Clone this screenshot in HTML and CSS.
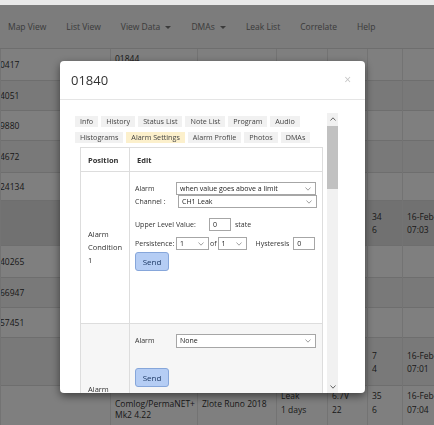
FILE: index.html
```html
<!DOCTYPE html>
<html lang="en">
<head>
<meta charset="utf-8">
<title>01840</title>
<link rel="stylesheet" href="styles.css">
</head>
<body>
<div class="topstrip"></div>
<nav class="navbar">
  <a>Map View</a>
  <a>List View</a>
  <a>View Data <span class="caret"></span></a>
  <a>DMAs <span class="caret"></span></a>
  <a>Leak List</a>
  <a>Correlate</a>
  <a>Help</a>
</nav>
<table class="list">
  <colgroup>
    <col class="w0"><col class="w1"><col class="w2"><col class="w3"><col class="w4"><col class="w5"><col class="w6">
  </colgroup>
  <tbody>
    <tr class="h32"><td class="idc">0417</td><td class="top">01844</td><td></td><td></td><td></td><td></td><td></td></tr>
    <tr class="h30 odd"><td class="idc">4051</td><td></td><td></td><td></td><td></td><td></td><td></td></tr>
    <tr class="h30"><td class="idc">9880</td><td></td><td></td><td></td><td></td><td></td><td></td></tr>
    <tr class="h32 odd"><td class="idc">4672</td><td></td><td></td><td></td><td></td><td></td><td></td></tr>
    <tr class="h28"><td class="idc">24134</td><td></td><td></td><td></td><td></td><td></td><td></td></tr>
    <tr class="h45 hl"><td class="idc"></td><td></td><td></td><td></td><td></td><td>34<br>6</td><td>16-Feb-<br>07:03</td></tr>
    <tr class="h32"><td class="idc">40265</td><td></td><td></td><td></td><td></td><td></td><td></td></tr>
    <tr class="h30 odd"><td class="idc">66947</td><td></td><td></td><td></td><td></td><td></td><td></td></tr>
    <tr class="h30"><td class="idc">57451</td><td></td><td></td><td></td><td></td><td></td><td></td></tr>
    <tr class="h48 odd"><td class="idc"></td><td></td><td></td><td></td><td></td><td>7<br>4</td><td>16-Feb-<br>07:01</td></tr>
    <tr class="h50 last"><td class="idc"></td><td class="dev">Comlog/PermaNET+<br>Mk2 4.22</td><td class="dev">Zlote Runo 2018</td><td>Leak<br>1 days</td><td>6.7V<br>22</td><td>35<br>6</td><td>16-Feb-<br>07:04</td></tr>
  </tbody>
</table>

<div class="backdrop"></div>

<div class="modal">
  <div class="modal-header">
    <h4 class="modal-title">01840</h4>
    <span class="close">&times;</span>
  </div>
  <div class="modal-body">
    <div class="pane">
      <ul class="tabs">
        <li>Info</li>
        <li>History</li>
        <li>Status List</li>
        <li>Note List</li>
        <li>Program</li>
        <li>Audio</li>
        <li>Histograms</li>
        <li class="active">Alarm Settings</li>
        <li>Alarm Profile</li>
        <li>Photos</li>
        <li>DMAs</li>
      </ul>
      <table class="alarms">
        <thead>
          <tr><th class="c-pos">Position</th><th>Edit</th></tr>
        </thead>
        <tbody>
          <tr>
            <td class="pos">Alarm<br>Condition<br>1</td>
            <td class="edit">
              <div class="form">
                <div class="frow">
                  <span class="lbl">Alarm</span>
                  <div class="select wide"><span>when value goes above a limit</span><svg class="chev" viewBox="0 0 6 4" width="6" height="4"><polyline points="0.5,0.5 3,3.2 5.5,0.5"/></svg></div>
                </div>
                <div class="frow">
                  <span class="lbl ch">Channel :</span>
                  <div class="select wide2"><span>CH1 Leak</span><svg class="chev" viewBox="0 0 6 4" width="6" height="4"><polyline points="0.5,0.5 3,3.2 5.5,0.5"/></svg></div>
                </div>
                <div class="frow gap10">
                  <span class="lbl upper">Upper Level Value:</span>
                  <div class="input">0</div>
                  <span class="unit">state</span>
                </div>
                <div class="frow gap6">
                  <span class="lbl">Persistence:</span>
                  <div class="select s1"><span>1</span><svg class="chev" viewBox="0 0 6 4" width="6" height="4"><polyline points="0.5,0.5 3,3.2 5.5,0.5"/></svg></div>
                  <span class="of">of</span>
                  <div class="select s2"><span>1</span><svg class="chev" viewBox="0 0 6 4" width="6" height="4"><polyline points="0.5,0.5 3,3.2 5.5,0.5"/></svg></div>
                  <span class="hyst">Hysteresis</span>
                  <div class="input">0</div>
                </div>
                <button class="send">Send</button>
              </div>
            </td>
          </tr>
          <tr class="alt">
            <td class="pos">Alarm<br>Condition<br>2</td>
            <td class="edit">
              <div class="form">
                <div class="frow">
                  <span class="lbl">Alarm</span>
                  <div class="select wide tall"><span>None</span><svg class="chev" viewBox="0 0 6 4" width="6" height="4"><polyline points="0.5,0.5 3,3.2 5.5,0.5"/></svg></div>
                </div>
                <button class="send far">Send</button>
              </div>
            </td>
          </tr>
        </tbody>
      </table>
    </div>
    <div class="sb">
      <div class="sb-btn"><svg viewBox="0 0 6 4" width="6" height="4"><polyline points="0.5,3.5 3,0.8 5.5,3.5"/></svg></div>
      <div class="sb-thumb"></div>
      <div class="sb-track"></div>
      <div class="sb-btn"><svg viewBox="0 0 6 4" width="6" height="4"><polyline points="0.5,0.5 3,3.2 5.5,0.5"/></svg></div>
    </div>
  </div>
</div>
</body>
</html>
```

FILE: styles.css
```css
html, body {
  margin: 0;
  padding: 0;
}
body {
  width: 434px;
  height: 425px;
  overflow: hidden;
  background: #fff;
  color: #333;
  font-family: "Open Sans", "Noto Sans", sans-serif;
}

/* page behind the dialog */
.topstrip {
  height: 5px;
  background: #e9e9e9;
}
.navbar {
  height: 42px;
  box-sizing: content-box;
  border-bottom: 1px solid #dcdcdc;
  background: #f8f8f8;
  display: flex;
  align-items: center;
  gap: 20px;
  padding: 0 0 2px 8px;
  font-size: 8.5px;
  color: #777;
  white-space: nowrap;
}
.caret {
  display: inline-block;
  width: 0;
  height: 0;
  margin-left: 3px;
  vertical-align: middle;
  border-top: 3px solid #777;
  border-left: 3px solid transparent;
  border-right: 3px solid transparent;
}
.list {
  width: 462px;
  table-layout: fixed;
  border-collapse: collapse;
  font-size: 8.5px;
  line-height: 13px;
  color: #333;
  margin-top: -2px;
}
.w0 { width: 110px; }
.w1 { width: 87px; }
.w2 { width: 79px; }
.w3 { width: 51px; }
.w4 { width: 40px; }
.w5 { width: 35px; }
.w6 { width: 60px; }
.list td {
  border-top: 1px solid #ddd;
  border-left: 1px solid #e6e6e6;
  padding: 0 0 0 4px;
  vertical-align: middle;
  white-space: nowrap;
  overflow: hidden;
}
.list tr { background: #fff; }
.list tr.odd { background: #f2f2f2; }
.list tr.hl { background: #e2e2e2; }
.list td.idc { padding-left: 0; text-indent: -1px; }
.list td.top { vertical-align: top; padding-top: 3px; }
.h28 { height: 28px; }
.h30 { height: 30px; }
.h32 { height: 32px; }
.h45 { height: 45px; }
.h48 { height: 48px; }
.h50 { height: 50px; }
.list tr.last td {
  vertical-align: top;
  padding-top: 3px;
  line-height: 14px;
}
.list tr.last td.dev {
  padding-top: 12px;
  line-height: 11px;
}

.backdrop {
  position: fixed;
  top: 5px;
  left: 0;
  right: 0;
  bottom: 0;
  background: rgba(0, 0, 0, 0.5);
}

/* dialog */
.modal {
  position: fixed;
  left: 60px;
  top: 61px;
  width: 305px;
  height: 332px;
  background: #fff;
  border-radius: 4px;
  box-shadow: 0 3px 9px rgba(0, 0, 0, 0.5);
  overflow: hidden;
  display: flex;
  flex-direction: column;
  color: #333;
}
.modal-header {
  height: 38px;
  flex: none;
  border-bottom: 1px solid #e5e5e5;
  display: flex;
  align-items: center;
  justify-content: space-between;
  padding: 0 14px 0 11px;
}
.modal-title {
  margin: 0;
  font-size: 13px;
  font-weight: normal;
  color: #333;
}
.close {
  font-size: 12px;
  color: #c4c4c4;
  line-height: 1;
}
.modal-body {
  flex: 1;
  min-height: 0;
  display: flex;
  padding: 13px 27px 0 15px;
}
.pane {
  flex: 1;
  min-width: 0;
  overflow: hidden;
  padding-top: 3px;
}

.tabs {
  list-style: none;
  margin: 0;
  padding: 0;
  display: flex;
  flex-wrap: wrap;
  gap: 5px 3px;
}
.tabs li {
  height: 11px;
  line-height: 11px;
  padding: 0 5px;
  background: #f1f1f1;
  font-size: 7.2px;
  color: #444;
  white-space: nowrap;
}
.tabs li.active {
  background: #fcf0cc;
}

.alarms {
  margin: 4px 0 0 5px;
  width: 241px;
  border-collapse: collapse;
  border: 1px solid #ddd;
  font-size: 7.5px;
  color: #333;
}
.alarms th {
  height: 23px;
  padding: 0 7px;
  text-align: left;
  font-weight: bold;
  border: 1px solid #ddd;
}
.alarms th.c-pos { width: 33px; }
.alarms td {
  border: 1px solid #ddd;
}
.alarms tr.alt td { background: #f6f6f6; }
.alarms td.pos {
  padding: 0 7px;
  line-height: 13px;
  vertical-align: middle;
}
.alarms td.edit {
  padding: 0 5px;
  vertical-align: top;
}
.form {
  box-sizing: border-box;
  height: 151px;
  padding-top: 10px;
  font-size: 7px;
  color: #333;
}
.alarms tr.alt .form { height: 157px; }
.frow {
  display: flex;
  align-items: center;
  height: 13px;
  white-space: nowrap;
}
.gap10 { margin-top: 10px; }
.gap6 { margin-top: 6px; }
.lbl {
  width: 41px;
  flex: none;
}
.lbl.ch { width: 43px; }
.lbl.upper { width: 74px; }
.select {
  box-sizing: border-box;
  height: 13px;
  border: 1px solid #a6a6a6;
  background: #fff;
  display: flex;
  align-items: center;
  justify-content: space-between;
  padding: 0 4px 0 3px;
  color: #222;
}
.select.tall { height: 14px; }
.select.wide { width: 140px; }
.select.wide2 { width: 139px; }
.select.s1 { width: 33px; }
.select.s2 { width: 29px; }
.chev {
  flex: none;
  fill: none;
  stroke: #8a8a8a;
  stroke-width: 0.8;
}
.input {
  box-sizing: border-box;
  width: 22px;
  height: 13px;
  border: 1px solid #a6a6a6;
  padding-left: 3px;
  line-height: 11px;
  color: #222;
}
.unit { margin-left: 4px; }
.of { margin: 0 1px; }
.hyst { margin: 0 4px 0 9px; }
.send {
  display: block;
  margin-top: 2px;
  width: 34px;
  height: 19px;
  padding: 0;
  border: 1px solid #86a6da;
  border-radius: 3px;
  background: #b5cdf4;
  color: #1e3a66;
  font-family: "Open Sans", "Noto Sans", sans-serif;
  font-size: 8px;
}
.send.far { margin-top: 21px; }

/* fake scrollbar */
.sb {
  width: 11px;
  flex: none;
  background: #f1f1f1;
  display: flex;
  flex-direction: column;
}
.sb-btn {
  height: 12px;
  flex: none;
  display: flex;
  align-items: center;
  justify-content: center;
}
.sb-btn svg {
  fill: none;
  stroke: #555;
  stroke-width: 0.9;
}
.sb-thumb {
  height: 63px;
  margin-top: 1px;
  background: #c1c1c1;
  flex: none;
}
.sb-track { flex: 1; }
```
